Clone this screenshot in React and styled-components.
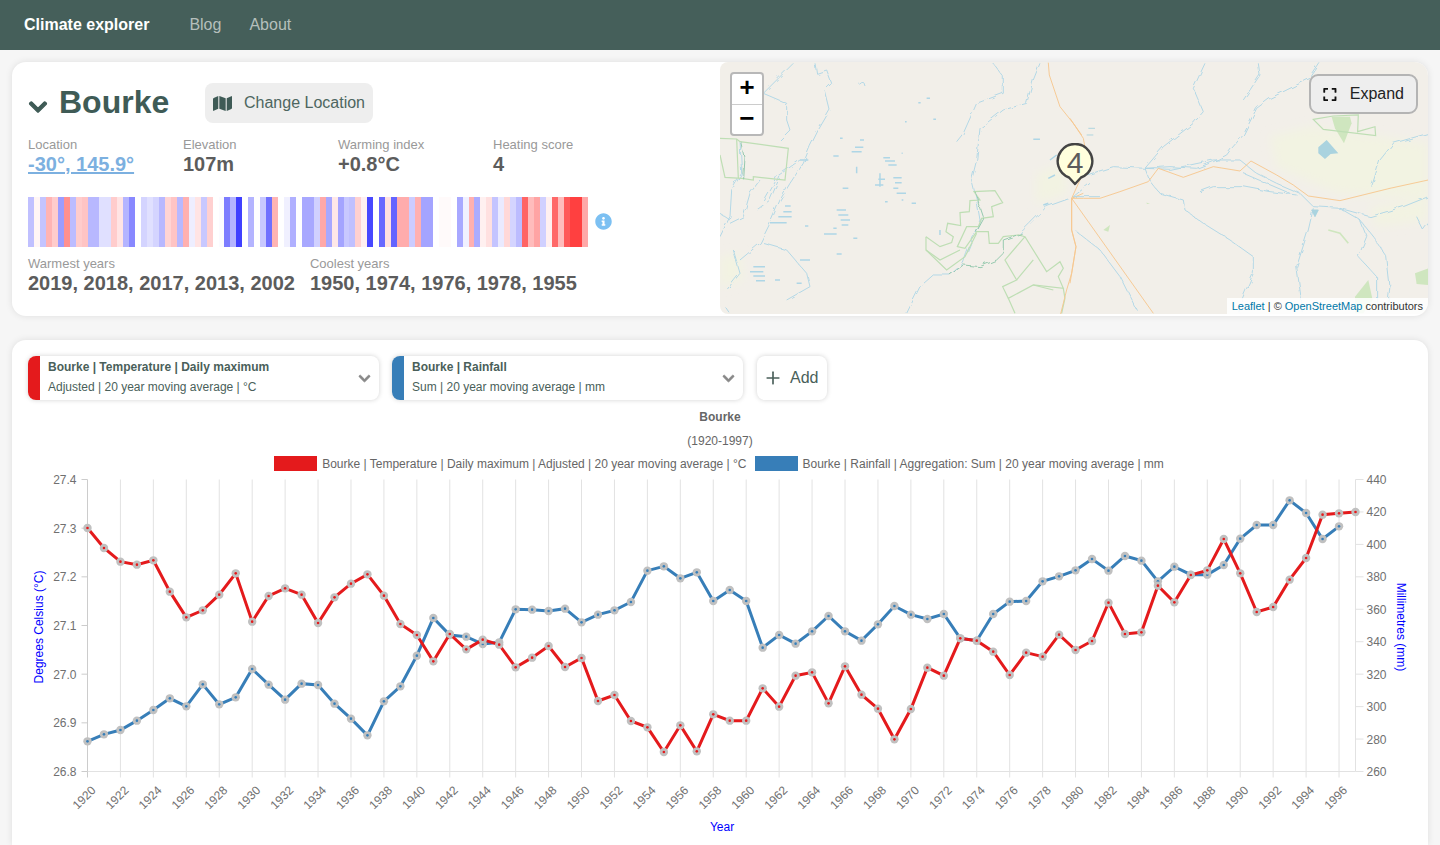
import React from 'react';
import styled, { createGlobalStyle } from 'styled-components';
import { FaChevronDown, FaMap, FaExpand, FaInfoCircle } from 'react-icons/fa';
import { Plus } from 'lucide-react';

const GlobalStyle = createGlobalStyle`
  html, body {
    margin: 0;
    height: 845px;
    overflow: hidden;
    background: #f6f6f6;
    font-family: "Liberation Sans", Arial, sans-serif;
  }
  * { box-sizing: border-box; }
`;

const STRIPES = [
  '#c0c0ff', '#fff5f5', '#c4c4ff', '#ffb4b4', '#ffcccc', '#9c9cff', '#ff9090', '#bcbcff', '#ffcccc', '#ffc4c4',
  '#b8b8ff', '#b8b8ff', '#e0e0ff', '#e0e0ff', '#ffcccc', '#ffe4e4', '#b4b4ff', '#8888ff', '#ffffff', '#d4d4ff',
  '#e0e0ff', '#d4d4ff', '#b8b8ff', '#ffd4d4', '#ffc4c4', '#b8b8ff', '#ffb0b0', '#eeeeff', '#ffe4e4', '#c8c8ff',
  '#ffd0d0', '#ffffff', '#fbfbff', '#7c7cff', '#b4b4ff', '#4040ff', '#ffffff', '#b4b4ff', '#ffffff', '#c8c8ff',
  '#7070ff', '#ffb4b4', '#ffffff', '#f0f0ff', '#b0b0ff', '#ffffff', '#a8a8ff', '#a8a8ff', '#d0d0ff', '#ffa8a8',
  '#a8a8ff', '#ffe8e8', '#a4a4ff', '#c8c8ff', '#c0c0ff', '#ffd0d0', '#fff0f0', '#4848ff', '#ffffff', '#6868ff',
  '#ffe0e0', '#6464ff', '#ffacac', '#ffacac', '#ccccff', '#ffb0b0', '#a4a4ff', '#a4a4ff', '#ffffff', '#fffafa',
  '#fffafa', '#ffffff', '#a8a8ff', '#f0f0ff', '#ffb0b0', '#acacff', '#fff0f0', '#ffe0e0', '#c4c4ff', '#eaeaff',
  '#ffd8d8', '#d4d4ff', '#bcbcff', '#ff6464', '#ffbcbc', '#ffa4a4', '#d0d0ff', '#fff0f0', '#ff6868', '#ffbcbc',
  '#ff5858', '#ff4040', '#ff4040', '#ffa8a8',
];

// y positions of the two series, traced off the chart (3 units = 1px, 0 = page y 470)
const TEMP = [
  177, 237, 278, 287, 274, 368, 445, 424, 377, 313, 458, 381, 358, 377, 462, 385, 344, 316, 380, 465,
  498, 577, 495, 541, 512, 527, 595, 566, 531, 594, 567, 696, 678, 756, 775, 849, 769, 847, 736, 755,
  755, 658, 713, 620, 610, 703, 592, 677, 719, 811, 720, 596, 620, 508, 515, 548, 618, 551, 563, 497,
  543, 516, 401, 495, 490, 350, 400, 318, 304, 210, 313, 429, 414, 332, 267, 137, 133, 129,
];
const RAIN = [
  817, 796, 783, 755, 723, 688, 712, 646, 706, 685, 600, 647, 692, 644, 648, 704, 749, 799, 697, 652,
  560, 447, 498, 503, 525, 520, 421, 422, 426, 419, 460, 437, 424, 399, 305, 292, 328, 310, 396, 363,
  396, 536, 498, 524, 487, 441, 487, 515, 466, 411, 437, 450, 435, 508, 515, 435, 398, 396, 337, 322,
  304, 270, 305, 261, 275, 337, 293, 317, 317, 288, 209, 168, 168, 94, 132, 210, 172,
];

const PLOT = { left: 87.5, right: 1355.5, top: 480.5, bottom: 772.5 };
const yearX = (i) => PLOT.left + (i * (PLOT.right - PLOT.left)) / 77;
const toPoints = (list) => list.map((v, i) => [yearX(i), 470 + v / 3]);

function Series({ data, color }) {
  const pts = toPoints(data);
  return (
    <g>
      <polyline points={pts.map((p) => p.join(',')).join(' ')} fill="none" stroke={color} strokeWidth="3" />
      {pts.map(([x, y]) => (
        <g key={x}>
          <circle cx={x} cy={y} r="4.2" fill="#c0c0c0" />
          <circle cx={x} cy={y} r="1.3" fill={color} />
        </g>
      ))}
    </g>
  );
}

function Chart() {
  const years = Array.from({ length: 39 }, (_, i) => i * 2);
  const leftTicks = ['27.4', '27.3', '27.2', '27.1', '27.0', '26.9', '26.8'];
  const rightTicks = [440, 420, 400, 380, 360, 340, 320, 300, 280, 260];
  const h = PLOT.bottom - PLOT.top;
  return (
    <ChartSvg viewBox="28 472 1384 370">
      {years.map((i) => (
        <line key={i} x1={yearX(i)} x2={yearX(i)} y1={PLOT.top} y2={PLOT.bottom + 6} stroke={i ? '#e2e2e2' : '#cccccc'} />
      ))}
      <line x1={PLOT.right} x2={PLOT.right} y1={PLOT.top} y2={PLOT.bottom} stroke="#e2e2e2" />
      <line x1={PLOT.left} x2={PLOT.right} y1={PLOT.bottom} y2={PLOT.bottom} stroke="#e2e2e2" />
      {leftTicks.map((t, i) => {
        const y = PLOT.top + (i * h) / 6;
        return (
          <g key={t}>
            <line x1={PLOT.left - 6} x2={PLOT.left} y1={y} y2={y} stroke="#cccccc" />
            <TickText x={PLOT.left - 11} y={y + 4.5} textAnchor="end">{t}</TickText>
          </g>
        );
      })}
      {rightTicks.map((t, i) => {
        const y = PLOT.top + (i * h) / 9;
        return (
          <g key={t}>
            <line x1={PLOT.right} x2={PLOT.right + 8} y1={y} y2={y} stroke="#e2e2e2" />
            <TickText x={PLOT.right + 11} y={y + 4.5}>{t}</TickText>
          </g>
        );
      })}
      {years.map((i) => (
        <TickText key={i} textAnchor="end" transform={`translate(${yearX(i) + 9} 792) rotate(-45)`}>{1920 + i}</TickText>
      ))}
      <AxisTitle transform="translate(43 628) rotate(-90)" textAnchor="middle">Degrees Celsius (°C)</AxisTitle>
      <AxisTitle transform="translate(1397 628) rotate(90)" textAnchor="middle">Millimetres (mm)</AxisTitle>
      <AxisTitle x="722" y="832" textAnchor="middle">Year</AxisTitle>
      <Series data={RAIN} color="#377eb8" />
      <Series data={TEMP} color="#e41a1c" />
    </ChartSvg>
  );
}

function MapDrawing() {
  return (
    <MapSvg viewBox="720 62 708 252" preserveAspectRatio="none">
      <defs>
        <filter id="wiggle" x="-5%" y="-5%" width="110%" height="110%">
          <feTurbulence type="fractalNoise" baseFrequency="0.035" numOctaves="2" seed="4" />
          <feDisplacementMap in="SourceGraphic" scale="16" />
        </filter>
        <filter id="soft">
          <feGaussianBlur stdDeviation="14" />
        </filter>
      </defs>
      <rect x="720" y="62" width="708" height="252" fill="#f2efe9" />
      {/* left half, traced at 3x */}
      <g transform="translate(720 60) scale(0.3333)" fill="none" strokeWidth="2.8">
        <g fill="#f2f3e2" stroke="none" filter="url(#soft)">
          <path d="M950 340 L1040 310 L1040 400 L950 430 Z" />
          <path d="M0 590 L60 580 L70 660 L0 680 Z" />
        </g>
        <g stroke="#aed6e6" filter="url(#wiggle)">
          <path d="M960 10 L940 60 L920 130 L850 150 L780 205 L770 300 L755 360 L770 420 L780 480 L740 580 L730 610 L690 645 L640 645 L600 680 L560 760" />
          <path d="M820 10 L850 50 L850 100 L770 130 L730 220 L710 245" />
          <path d="M1050 415 L980 440 L930 490 L900 520" />
          <path d="M285 10 L290 40 L320 30 L335 70 L315 90 L330 150 L295 210 L270 260 L250 310 L210 370 L180 420 L150 490 L120 550 L60 600" />
          <path d="M220 10 L130 100 L200 130 L200 180 L210 210 L170 250" />
          <path d="M60 240 L65 340 L35 390 L30 470 L0 530" />
          <path d="M120 360 L90 400 L70 470 L30 490" />
          <path d="M180 350 L150 420 L110 450 M240 300 L170 350 L130 420" />
          <path d="M130 550 L200 570 L260 640 L270 680 L200 720" />
          <path d="M0 460 L30 480 M40 570 L60 640 L20 690" />
          <path d="M20 745 L30 760 M415 70 Q430 55 435 78" />
        </g>
        <g stroke="#aed6e6" strokeWidth="4.5">
          <path d="M340 288 H356 M395 275 H425 M405 262 H430 M490 293 H510 M495 303 H525 M505 315 H530 M420 240 H432 M360 235 H368 M545 280 H548" />
          <path d="M465 375 H490 M475 358 H495 M520 353 H545 M525 368 H545 M530 400 H558 M520 385 H535 M545 420 H550 M575 430 H588 M368 385 H385 M495 425 H503" />
          <path d="M240 300 H265 M350 450 H378 M355 465 H385 M362 480 H390 M365 495 H385 M312 522 H350 M340 505 H350 M400 535 H412 M255 498 H265 M350 582 H365" />
          <path d="M195 438 H212 M190 455 H215 M175 470 H215 M150 488 H200 M100 620 H135 M90 635 H130 M100 648 H135 M108 662 H135 M240 600 H270 M165 660 H180 M230 670 H245" />
          <path d="M410 320 V340 M480 340 V380 M990 300 L1010 285 M985 355 L1005 345 M940 238 H960 M970 435 L985 430 M620 115 H630 M595 128 H602 M640 178 H648 M555 185 H560 M660 510 V525" />
        </g>
        <g stroke="#bedeb4" strokeWidth="3.6">
          <path d="M0 235 L50 237 L60 245 L205 265 L195 360 L100 350 L100 360 L65 355 L15 352 L0 285" />
          <path d="M50 237 L55 355" />
          <path d="M618 530 L660 560 L695 548 L700 530 L678 515 L683 490 L722 497 L720 458 L748 455 L750 422 L780 420 L762 395 L825 392 L848 428 L815 440 L820 470 L785 475 L775 500 L740 500 L712 560 L735 565 L770 515 L805 515 L808 550 L835 550 L850 530 L895 525 L915 530 L980 635 L1020 605 L1030 625 L1015 650 L1030 685 L940 675 L865 715 L848 680 L890 660 L855 600 L915 530" />
          <path d="M618 530 L618 570 L680 630 L735 590 L770 520" />
          <path d="M618 570 L660 600 L720 570" />
          <path d="M865 715 L885 760 M940 600 L890 660 M1030 685 L1035 715 L1025 760 M940 675 L1000 690" />
        </g>
        <g stroke="#8fc6aa" filter="url(#wiggle)">
          <path d="M62 245 L72 290 L68 355" />
          <path d="M765 395 L790 470 L765 515" />
          <path d="M690 645 L730 615 L780 620 L830 600 L850 580 L850 540 L905 520" />
        </g>
        <g stroke="#f6c78f">
          <path d="M985 8 L988 45 L1020 140 L1060 190 L1085 225" />
          <path d="M1055 415 L1055 510 L1068 560 L1055 640 L1040 690 L1022 762" />
          <path d="M1055 415 L1090 400" />
        </g>
      </g>
      {/* right half */}
      <g transform="translate(1070 60) scale(0.3333)" fill="none" strokeWidth="2.8">
        <g fill="#f2f3e2" stroke="none" filter="url(#soft)">
          <path d="M600 230 L720 200 L1075 250 L1075 420 L800 400 L620 320 Z" />
          <path d="M900 440 L1075 420 L1075 480 L920 500 Z" />
        </g>
        <g stroke="#aed6e6" filter="url(#wiggle)">
          <path d="M750 10 L720 55 L600 115 L560 145 L520 225 L485 265 L470 285 L430 305 L380 325 L300 320 L225 325 L280 260 L370 190 L400 155 L370 85 L405 10" />
          <path d="M565 10 L570 45 L520 120" />
          <path d="M50 345 L130 320 L225 325 L240 365 L270 400 L340 420 L345 450 L400 490 L480 540 L550 590 L550 640 L515 720 L510 760" />
          <path d="M225 325 L300 328 L430 300 L510 300 L560 340 L620 370 L690 400 L730 440 L810 445 L870 480 L910 530 L950 590 L960 680 L950 760" />
          <path d="M10 410 L60 370 M10 410 L90 410" />
          <path d="M730 445 L715 510 L680 620 L700 760" />
          <path d="M810 445 L900 470 L1000 440 L1075 410" />
          <path d="M870 480 L890 530 L865 590 L920 650 L920 740" />
          <path d="M905 380 L930 300 L970 250 L1075 220" />
          <path d="M390 395 L430 380 L520 380 L600 395 L680 405" />
          <path d="M520 340 L590 370 L660 400 M20 515 L90 570 L150 650 L200 750" />
          <path d="M1040 470 L1060 510 L1075 490" />
        </g>
        <g fill="#cfe6bf" stroke="none">
          <path d="M785 170 L840 170 L845 190 L822 250 L795 205 Z" />
          <path d="M1035 640 L1075 625 L1075 675 L1040 672 Z" />
          <path d="M855 710 L895 660 L908 720 L880 760 L855 760 Z" />
          <path d="M100 510 L120 495 L115 515 Z M228 428 L240 430 L232 432 Z" />
        </g>
        <path d="M745 262 L770 240 L805 280 L782 282 L765 297 L745 280 Z" fill="#aad3df" />
        <path d="M725 450 L745 450 L735 470 Z M55 205 H75 M50 225 H70" fill="#aad3df" stroke="#aad3df" />
        <g stroke="#bedeb4">
          <path d="M730 178 L790 168 L865 165 L863 215 L915 200 L917 227 L760 208 Z" strokeWidth="3.6" />
          <path d="M775 510 L810 520 L835 550" strokeWidth="5" stroke="#cfe6bf" />
        </g>
        <g stroke="#f6c78f">
          <path d="M0 175 L40 235 L50 290 L30 360 L5 415" />
          <path d="M5 415 L5 510 L18 560 L5 640 L0 670" />
          <path d="M5 415 L40 415 L90 415 L150 395 L235 365 L265 325 L340 352 L430 320 L510 333 L543 303 L620 345 L670 375 L715 408 L810 422 L960 385 L1075 360" />
          <path d="M5 415 L30 450 L250 760" />
        </g>
      </g>
    </MapSvg>
  );
}

function Dropdown({ color, title, subtitle }) {
  return (
    <SeriesSelect>
      <SeriesColor $color={color} />
      <SeriesText>
        <strong>{title}</strong>
        <span>{subtitle}</span>
      </SeriesText>
      <SelectChevron><FaChevronDown /></SelectChevron>
    </SeriesSelect>
  );
}

export default function App() {
  return (
    <>
      <GlobalStyle />
      <NavBar>
        <Brand>Climate explorer</Brand>
        <NavLink>Blog</NavLink>
        <NavLink>About</NavLink>
      </NavBar>
      <Main>
        <Card>
          <InfoPanel>
            <TitleRow>
              <TitleChevron><FaChevronDown /></TitleChevron>
              <PlaceName>Bourke</PlaceName>
              <ChangeButton><FaMap />Change Location</ChangeButton>
            </TitleRow>
            <Stats>
              <div>
                <Label>Location</Label>
                <ValueLink href="#">-30°, 145.9°</ValueLink>
              </div>
              <div>
                <Label>Elevation</Label>
                <Value>107m</Value>
              </div>
              <div>
                <Label>Warming index</Label>
                <Value>+0.8°C</Value>
              </div>
              <div>
                <Label>Heating score</Label>
                <Value>4</Value>
              </div>
            </Stats>
            <StripeRow>
              <Stripes>
                {STRIPES.map((c, i) => <Stripe key={i} $color={c} />)}
              </Stripes>
              <InfoIcon><FaInfoCircle /></InfoIcon>
            </StripeRow>
            <Years>
              <div>
                <Label>Warmest years</Label>
                <Value>2019, 2018, 2017, 2013, 2002</Value>
              </div>
              <div>
                <Label>Coolest years</Label>
                <Value>1950, 1974, 1976, 1978, 1955</Value>
              </div>
            </Years>
          </InfoPanel>
          <MapPane>
            <MapDrawing />
            <ZoomControl>
              <ZoomButton>+</ZoomButton>
              <ZoomButton>−</ZoomButton>
            </ZoomControl>
            <ExpandButton><FaExpand />Expand</ExpandButton>
            <Marker>
              <svg width="40" height="44" viewBox="0 0 40 44">
                <path d="M20 41 L14 34.5 A17.3 17.3 0 1 1 26 34.5 Z" fill="#ffffdd" stroke="#444444" strokeWidth="2.4" strokeLinejoin="round" />
              </svg>
              <MarkerCount>4</MarkerCount>
            </Marker>
            <Attribution>
              <a href="#">Leaflet</a> | © <a href="#">OpenStreetMap</a> contributors
            </Attribution>
          </MapPane>
        </Card>
        <ChartCard>
          <Toolbar>
            <Dropdown color="#e41a1c" title="Bourke | Temperature | Daily maximum" subtitle="Adjusted | 20 year moving average | °C" />
            <Dropdown color="#377eb8" title="Bourke | Rainfall" subtitle="Sum | 20 year moving average | mm" />
            <AddButton><Plus size={20} strokeWidth={2} />Add</AddButton>
          </Toolbar>
          <ChartTitle>Bourke</ChartTitle>
          <ChartSubtitle>(1920-1997)</ChartSubtitle>
          <Legend>
            <Swatch $color="#e41a1c" />
            <LegendText>Bourke | Temperature | Daily maximum | Adjusted | 20 year moving average | °C</LegendText>
            <Swatch $color="#377eb8" />
            <LegendText>Bourke | Rainfall | Aggregation: Sum | 20 year moving average | mm</LegendText>
          </Legend>
          <Chart />
        </ChartCard>
      </Main>
    </>
  );
}

const NavBar = styled.nav`
  height: 50px;
  background: #455f5a;
  display: flex;
  align-items: center;
  padding: 0 24px;
`;

const Brand = styled.div`
  color: #fff;
  font-size: 16px;
  font-weight: 700;
  margin-right: 40px;
`;

const NavLink = styled.a`
  color: #b5bfbc;
  font-size: 16px;
  margin-right: 28px;
`;

const Main = styled.main`
  display: flex;
  flex-direction: column;
  gap: 24px;
  padding: 12px 12px 0;
`;

const Card = styled.section`
  display: flex;
  height: 254px;
  background: #fff;
  border-radius: 14px;
  box-shadow: 0 0 7px rgba(0, 0, 0, 0.1);
  overflow: hidden;
`;

const InfoPanel = styled.div`
  width: 708px;
  flex: none;
  padding: 21px 16px 0;
`;

const TitleRow = styled.div`
  display: flex;
  align-items: center;
  height: 40px;
`;

const TitleChevron = styled.span`
  display: flex;
  color: #3f5b56;
  font-size: 20px;
  margin: 7px 11px 0 0;
  svg { stroke: currentColor; stroke-width: 30; }
`;

const PlaceName = styled.h1`
  margin: 0 0 2px;
  color: #3f5b56;
  font-size: 32px;
  font-weight: 700;
  width: 146px;
`;

const ChangeButton = styled.button`
  display: flex;
  align-items: center;
  gap: 12px;
  height: 40px;
  width: 168px;
  padding: 0 8px;
  border: none;
  border-radius: 8px;
  background: #eeeeee;
  color: #4d6660;
  font-family: inherit;
  font-size: 16px;
  white-space: nowrap;
  svg { font-size: 19px; color: #3f5b56; }
`;

const Stats = styled.div`
  display: grid;
  grid-template-columns: repeat(4, 155px);
  margin-top: 14px;
`;

const Label = styled.div`
  color: #999;
  font-size: 13px;
  line-height: 16px;
`;

const Value = styled.div`
  color: #5c5c5c;
  font-size: 20px;
  font-weight: 700;
  line-height: 22px;
  white-space: nowrap;
`;

const ValueLink = styled.a`
  display: inline-block;
  color: #7cb0e0;
  font-size: 20px;
  font-weight: 700;
  line-height: 22px;
  text-decoration: underline;
`;

const StripeRow = styled.div`
  display: flex;
  align-items: center;
  margin-top: 22px;
`;

const Stripes = styled.div`
  display: flex;
  width: 560px;
  height: 50px;
`;

const Stripe = styled.span`
  flex: 1;
  background: ${(p) => p.$color};
`;

const InfoIcon = styled.span`
  display: flex;
  margin: 0 0 0 7px;
  color: #7cc0f2;
  font-size: 17px;
  position: relative;
  top: -1px;
`;

const Years = styled.div`
  display: flex;
  gap: 15px;
  margin-top: 9px;
`;

const MapPane = styled.div`
  position: relative;
  flex: 1;
  height: 252px;
  overflow: hidden;
  border-radius: 8px 0 0 8px;
`;

const MapSvg = styled.svg`
  display: block;
  width: 100%;
  height: 100%;
`;

const ZoomControl = styled.div`
  position: absolute;
  top: 10px;
  left: 10px;
  border: 2px solid #b8b8b8;
  border-radius: 4px;
  background: #fff;
`;

const ZoomButton = styled.div`
  width: 30px;
  height: 30px;
  line-height: 30px;
  text-align: center;
  color: #000;
  font-family: "Liberation Mono", monospace;
  font-size: 26px;
  font-weight: 700;
  & + & { border-top: 1px solid #ccc; }
`;

const ExpandButton = styled.button`
  position: absolute;
  top: 12px;
  right: 10px;
  width: 109px;
  height: 40px;
  display: flex;
  align-items: center;
  gap: 13px;
  padding: 0 12px;
  border: 2px solid #b4b4b4;
  border-radius: 9px;
  background: #eeeeee;
  color: #222;
  font-family: inherit;
  font-size: 16px;
  svg { font-size: 15px; color: #111; }
`;

const Marker = styled.div`
  position: absolute;
  left: 335px;
  top: 81px;
  width: 40px;
  height: 44px;
`;

const MarkerCount = styled.span`
  position: absolute;
  top: 4px;
  left: 0;
  width: 40px;
  text-align: center;
  color: #5c5c5c;
  font-size: 30px;
  line-height: 32px;
`;

const Attribution = styled.div`
  position: absolute;
  right: 0;
  bottom: 0;
  padding: 1px 5px;
  background: rgba(255, 255, 255, 0.85);
  color: #333;
  font-size: 11px;
  line-height: 14px;
  a { color: #0078a8; text-decoration: none; }
`;

const ChartCard = styled.section`
  height: 505px;
  background: #fff;
  border-radius: 14px 14px 0 0;
  box-shadow: 0 0 7px rgba(0, 0, 0, 0.1);
  padding: 16px 16px 0;
`;

const Toolbar = styled.div`
  display: flex;
  gap: 13px;
  height: 44px;
`;

const SeriesSelect = styled.div`
  display: flex;
  align-items: center;
  width: 351px;
  border-radius: 8px;
  background: #fff;
  box-shadow: 0 0 5px rgba(0, 0, 0, 0.18);
  overflow: hidden;
`;

const SeriesColor = styled.span`
  width: 12px;
  align-self: stretch;
  background: ${(p) => p.$color};
`;

const SeriesText = styled.div`
  flex: 1;
  display: flex;
  flex-direction: column;
  gap: 6px;
  padding: 0 0 2px 8px;
  color: #4a5f5a;
  font-size: 12px;
  line-height: 14px;
`;

const SelectChevron = styled.span`
  display: flex;
  color: #888;
  font-size: 13px;
  margin-right: 8px;
  svg { stroke: currentColor; stroke-width: 30; }
`;

const AddButton = styled.button`
  display: flex;
  align-items: center;
  gap: 7px;
  width: 70px;
  margin-left: 1px;
  padding: 0 0 0 6px;
  border: none;
  border-radius: 8px;
  background: #fff;
  box-shadow: 0 0 5px rgba(0, 0, 0, 0.18);
  color: #4a5f5a;
  font-family: inherit;
  font-size: 16px;
`;

const ChartTitle = styled.div`
  margin-top: 10px;
  text-align: center;
  color: #666;
  font-size: 12px;
  font-weight: 700;
  line-height: 14px;
`;

const ChartSubtitle = styled.div`
  margin-top: 10px;
  text-align: center;
  color: #666;
  font-size: 12px;
  line-height: 14px;
`;

const Legend = styled.div`
  display: flex;
  align-items: center;
  justify-content: center;
  height: 15px;
  margin-top: 8px;
  color: #666;
  font-size: 12px;
`;

const Swatch = styled.span`
  width: 43px;
  height: 15px;
  margin-right: 5px;
  background: ${(p) => p.$color};
`;

const LegendText = styled.span`
  margin-right: 8px;
  &:last-child { margin-right: 2px; }
`;

const ChartSvg = styled.svg`
  display: block;
  width: 1384px;
  height: 370px;
`;

const TickText = styled.text`
  fill: #707070;
  font-size: 12px;
`;

const AxisTitle = styled.text`
  fill: #0000ff;
  font-size: 12px;
`;
